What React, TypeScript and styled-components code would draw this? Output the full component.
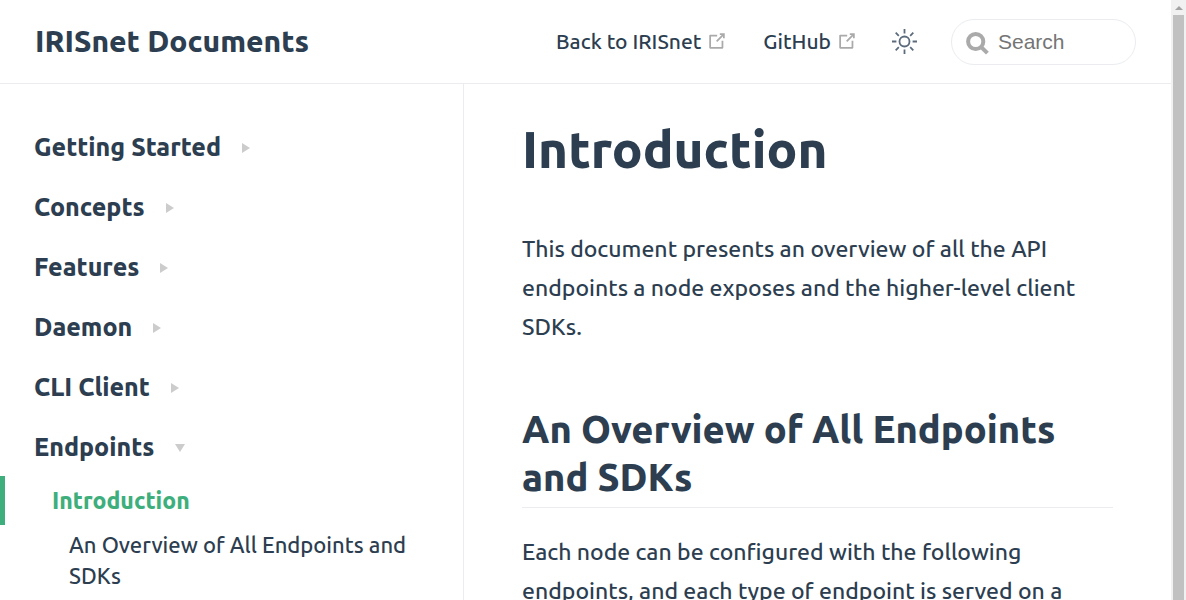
import React from 'react';
import styled, { createGlobalStyle, css } from 'styled-components';

const ink = '#2c3e50';
const accent = '#3eaf7c';
const line = '#eaecef';

const GlobalStyle = createGlobalStyle`
  *, *::before, *::after { box-sizing: border-box; }
  body {
    margin: 0;
    background: #fff;
    color: ${ink};
    font-family: Ubuntu, "Noto Sans", "Open Sans", sans-serif;
    font-size: 22px;
    font-weight: 480;
  }
  a { color: inherit; text-decoration: none; }
`;

const Shell = styled.div`
  display: flex;
  height: 100vh;
  overflow: hidden;
`;

const Page = styled.div`
  flex: 1;
  min-width: 0;
  display: flex;
  flex-direction: column;
`;

const Header = styled.header`
  flex: none;
  display: flex;
  align-items: center;
  justify-content: space-between;
  padding: 19px 35px 18px;
  border-bottom: 1px solid ${line};
`;

const SiteName = styled.a`
  font-size: 30px;
  line-height: 44px;
  padding-bottom: 2px;
  font-weight: 800;
  white-space: nowrap;
`;

const Tools = styled.div`
  display: flex;
  align-items: center;
`;

const Nav = styled.nav`
  display: flex;
  gap: 35px;
  margin-right: 33px;
  padding-bottom: 2px;
`;

const NavLink = styled.a`
  display: flex;
  align-items: center;
  gap: 5px;
  font-size: 21px;
  line-height: 32px;
  font-weight: 500;
  white-space: nowrap;
`;

const ThemeButton = styled.button`
  display: flex;
  padding: 0;
  margin: 0 33px 2px 0;
  border: 0;
  background: none;
  color: #5b6b7c;
`;

const SearchBox = styled.label`
  display: flex;
  align-items: center;
  gap: 8px;
  width: 185px;
  height: 46px;
  padding: 0 14px;
  border: 1px solid ${line};
  border-radius: 23px;
`;

const SearchInput = styled.input`
  flex: 1;
  min-width: 0;
  padding: 0;
  border: 0;
  outline: 0;
  background: none;
  color: ${ink};
  font-family: "Liberation Sans", Arial, sans-serif;
  font-size: 21px;
  line-height: 32px;
  &::placeholder { color: #757575; }
`;

const Body = styled.div`
  flex: 1;
  min-height: 0;
  display: flex;
`;

const Sidebar = styled.aside`
  flex: none;
  width: 464px;
  padding-top: 43px;
  border-right: 1px solid ${line};
  overflow: hidden;
`;

const Groups = styled.ul`
  display: flex;
  flex-direction: column;
  gap: 20px;
  margin: 0;
  padding: 0;
  list-style: none;
`;

const GroupButton = styled.button`
  display: flex;
  align-items: center;
  gap: 21px;
  width: 100%;
  padding: 0 34px;
  border: 0;
  background: none;
  color: inherit;
  font: inherit;
  font-size: 25px;
  font-weight: 800;
  line-height: 40px;
  text-align: left;
`;

const Arrow = styled.span<{ $open?: boolean }>`
  border: 0 solid transparent;
  margin-top: 2px;
  ${({ $open }) => $open
    ? css`border-width: 8px 5px 0; border-top-color: #ccc;`
    : css`border-width: 5px 0 5px 8px; border-left-color: #ccc;`}
`;

const SubLink = styled.a<{ $active?: boolean; $deep?: boolean }>`
  display: block;
  line-height: 31px;
  border-left: 5px solid transparent;
  padding: ${({ $deep }) => ($deep ? '4px 32px 4px 64px' : '9px 32px 9px 47px')};
  ${({ $active }) => $active && css`
    color: ${accent};
    border-left-color: ${accent};
    font-size: 23px;
    font-weight: 800;
  `}
`;

const SubList = styled.div`
  margin-top: 9px;
`;

const Main = styled.main`
  flex: 1;
  min-width: 0;
  padding: 33px 58px 0;
  overflow: hidden;
`;

const Title = styled.h1`
  margin: 0 0 48px;
  font-size: 51px;
  line-height: 64px;
  font-weight: 800;
`;

const Section = styled.h2`
  margin: 59px 0 24px;
  padding-bottom: 6px;
  border-bottom: 1px solid ${line};
  font-size: 38px;
  line-height: 48px;
  font-weight: 800;
`;

const Text = styled.p`
  margin: 0;
  font-size: 23px;
  line-height: 39px;
`;

const Track = styled.div`
  flex: none;
  width: 15px;
  display: flex;
  flex-direction: column;
  align-items: center;
  background: #f1f1f1;
`;

const TrackArrow = styled.span`
  margin: 6px 0 5px;
  border: 0 solid transparent;
  border-width: 0 4px 4px;
  border-bottom-color: #a3a3a3;
`;

const Thumb = styled.div`
  flex: 1;
  width: 11px;
  background: #c1c1c1;
`;

const External = () => (
  <svg width="22" height="22" viewBox="0 0 100 100" fill="#aaa" aria-hidden="true">
    <path d="M18.8 85.1h56c2.2 0 4-1.8 4-4v-32h-8v28h-48v-48h28v-8h-32c-2.2 0-4 1.8-4 4v56c0 2.2 1.8 4 4 4z" />
    <path d="M45.7 48.7 51.3 54.3 77.2 28.5v8.7h8V14.9H62.8v8h8.7z" />
  </svg>
);

const Sun = () => (
  <svg width="27" height="27" viewBox="0 0 27 27" fill="none" stroke="currentColor" strokeWidth="1.8" aria-hidden="true">
    <circle cx="13.5" cy="13.5" r="5" />
    <path d="M13.5 1v4.4M13.5 21.6V26M1 13.5h4.4M21.6 13.5H26M4.7 4.7l3.1 3.1M19.2 19.2l3.1 3.1M4.7 22.3l3.1-3.1M19.2 7.8l3.1-3.1" />
  </svg>
);

const Magnifier = () => (
  <svg width="24" height="26" viewBox="0 0 24 26" fill="none" stroke="#aaa" aria-hidden="true">
    <circle cx="9.7" cy="12.5" r="7.6" strokeWidth="4" />
    <path d="M15 17.8 21.4 24.2" strokeWidth="4" />
  </svg>
);

const groups = ['Getting Started', 'Concepts', 'Features', 'Daemon', 'CLI Client', 'Endpoints'];

export default function App() {
  return (
    <Shell>
      <GlobalStyle />
      <Page>
        <Header>
          <SiteName href="#">IRISnet Documents</SiteName>
          <Tools>
            <Nav>
              <NavLink href="#">Back to IRISnet<External /></NavLink>
              <NavLink href="#">GitHub<External /></NavLink>
            </Nav>
            <ThemeButton type="button" aria-label="Toggle theme"><Sun /></ThemeButton>
            <SearchBox>
              <Magnifier />
              <SearchInput type="text" placeholder="Search" aria-label="Search" />
            </SearchBox>
          </Tools>
        </Header>
        <Body>
          <Sidebar>
            <Groups>
              {groups.map((name) => {
                const open = name === 'Endpoints';
                return (
                  <li key={name}>
                    <GroupButton type="button" aria-expanded={open}>
                      {name}<Arrow $open={open} />
                    </GroupButton>
                    {open && (
                      <SubList>
                        <SubLink href="#introduction" $active>Introduction</SubLink>
                        <SubLink href="#overview" $deep>An Overview of All Endpoints and SDKs</SubLink>
                      </SubList>
                    )}
                  </li>
                );
              })}
            </Groups>
          </Sidebar>
          <Main>
            <Title id="introduction">Introduction</Title>
            <Text>
              This document presents an overview of all the API endpoints a node exposes and the
              higher-level client SDKs.
            </Text>
            <Section id="overview">An Overview of All Endpoints and SDKs</Section>
            <Text>
              Each node can be configured with the following endpoints, and each type of endpoint is
              served on a
            </Text>
          </Main>
        </Body>
      </Page>
      <Track aria-hidden="true">
        <TrackArrow />
        <Thumb />
      </Track>
    </Shell>
  );
}
